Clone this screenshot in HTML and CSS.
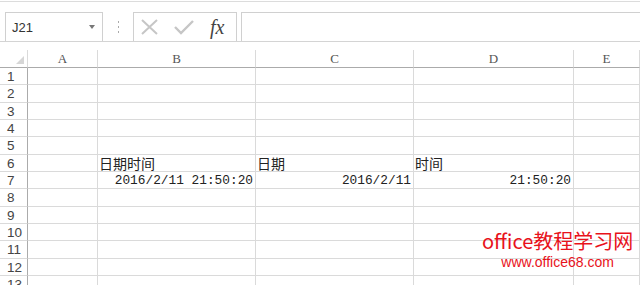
FILE: index.html
```html
<!DOCTYPE html>
<html>
<head>
<meta charset="utf-8">
<link rel="stylesheet" href="styles.css">
</head>
<body>
<div class="toolbar">
  <div class="namebox"><span class="nameval">J21</span><span class="dd"></span></div>
  <div class="dots"><i></i><i></i><i></i></div>
  <div class="btns">
    <svg class="ic" width="20" height="16" viewBox="0 0 20 16"><path d="M2 1 L17 15 M17 1 L2 15" stroke="#c6c6c6" stroke-width="2" fill="none"/></svg>
    <svg class="ic" width="22" height="16" viewBox="0 0 22 16"><path d="M2 8 L8 14 L20 2" stroke="#c6c6c6" stroke-width="2.4" fill="none"/></svg>
    <span class="fx">fx</span>
  </div>
  <div class="formula"></div>
</div>
<div class="sheet">
  <div class="hdr corner"><span class="tri"></span></div>
  <div class="hdr col">A</div>
  <div class="hdr col">B</div>
  <div class="hdr col">C</div>
  <div class="hdr col">D</div>
  <div class="hdr col">E</div>

  <div class="rh">1</div><div class="c"></div><div class="c"></div><div class="c"></div><div class="c"></div><div class="c"></div>
  <div class="rh">2</div><div class="c"></div><div class="c"></div><div class="c"></div><div class="c"></div><div class="c"></div>
  <div class="rh">3</div><div class="c"></div><div class="c"></div><div class="c"></div><div class="c"></div><div class="c"></div>
  <div class="rh">4</div><div class="c"></div><div class="c"></div><div class="c"></div><div class="c"></div><div class="c"></div>
  <div class="rh">5</div><div class="c"></div><div class="c"></div><div class="c"></div><div class="c"></div><div class="c"></div>
  <div class="rh">6</div><div class="c"></div><div class="c cjk">日期时间</div><div class="c cjk">日期</div><div class="c cjk">时间</div><div class="c"></div>
  <div class="rh">7</div><div class="c"></div><div class="c num">2016/2/11 21:50:20</div><div class="c num">2016/2/11</div><div class="c num">21:50:20</div><div class="c"></div>
  <div class="rh">8</div><div class="c"></div><div class="c"></div><div class="c"></div><div class="c"></div><div class="c"></div>
  <div class="rh">9</div><div class="c"></div><div class="c"></div><div class="c"></div><div class="c"></div><div class="c"></div>
  <div class="rh">10</div><div class="c"></div><div class="c"></div><div class="c"></div><div class="c"></div><div class="c"></div>
  <div class="rh">11</div><div class="c"></div><div class="c"></div><div class="c"></div><div class="c"></div><div class="c"></div>
  <div class="rh">12</div><div class="c"></div><div class="c"></div><div class="c"></div><div class="c"></div><div class="c"></div>
  <div class="rh">13</div><div class="c"></div><div class="c"></div><div class="c"></div><div class="c"></div><div class="c"></div>
</div>
<div class="watermark">
  <div class="wm1">office教程学习网</div>
  <div class="wm2">www.office68.com</div>
</div>
</body>
</html>
```

FILE: styles.css
```css
html, body {
  margin: 0;
  padding: 0;
  background: #fff;
  width: 640px;
  height: 285px;
  overflow: hidden;
  position: relative;
  font-family: "Liberation Sans", Arial, sans-serif;
}
.toolbar {
  border-top: 1px solid #dcdcdc;
  border-bottom: 1px solid #d4d4d4;
  box-sizing: border-box;
  margin-top: 1px;
  display: flex;
  align-items: flex-end;
  padding-left: 5px;
  height: 41px;
}
.namebox {
  width: 98px;
  height: 29px;
  box-sizing: border-box;
  border: 1px solid #d0d0d0;
  border-bottom: none;
  display: flex;
  align-items: center;
  justify-content: space-between;
  padding: 0 7px 0 6px;
}
.nameval {
  font-size: 13px;
  color: #333;
}
.dd {
  width: 0;
  height: 0;
  border-left: 3px solid transparent;
  border-right: 3px solid transparent;
  border-top: 4px solid #777;
}
.dots {
  width: 30px;
  height: 29px;
  display: flex;
  flex-direction: column;
  align-items: center;
  justify-content: center;
  gap: 3px;
}
.dots i {
  width: 1px;
  height: 2px;
  background: #aaa;
  display: block;
}
.btns {
  width: 104px;
  height: 29px;
  box-sizing: border-box;
  border: 1px solid #d0d0d0;
  border-bottom: none;
  display: flex;
  align-items: center;
  padding-left: 6px;
  gap: 13px;
}
.fx {
  font-family: "Liberation Serif", "Times New Roman", serif;
  font-style: italic;
  font-size: 20px;
  color: #444;
  margin-left: 2px;
}
.formula {
  flex: 1;
  height: 29px;
  box-sizing: border-box;
  border: 1px solid #d0d0d0;
  border-bottom: none;
  border-right: none;
  margin-left: 4px;
}
.sheet {
  margin-top: 8px;
  display: grid;
  grid-template-columns: 28px 70px 158px 158px 160px 66px;
  grid-template-rows: 18px repeat(13, 17.34px);
}
.hdr {
  box-sizing: border-box;
  border-right: 1px solid #dadada;
  border-bottom: 1px solid #ababab;
  background: #fff;
}
.col {
  font-family: "Liberation Serif", serif;
  font-size: 13px;
  color: #555;
  text-align: center;
  line-height: 18px;
}
.corner {
  position: relative;
}
.tri {
  position: absolute;
  right: 3px;
  bottom: 3px;
  width: 0;
  height: 0;
  border-left: 8px solid transparent;
  border-bottom: 8px solid #d6d6d6;
}
.rh {
  box-sizing: border-box;
  border-right: 1px solid #ababab;
  border-bottom: 1px solid #dadada;
  font-size: 13.5px;
  color: #444;
  padding-left: 7px;
  line-height: 17px;
}
.c {
  box-sizing: border-box;
  border-right: 1px solid #dadada;
  border-bottom: 1px solid #dadada;
  font-size: 13px;
  line-height: 17px;
  color: #222;
  white-space: nowrap;
  overflow: hidden;
}
.c.cjk {
  font-family: "Noto Sans CJK SC", sans-serif;
  font-size: 14px;
  padding-left: 1px;
  line-height: 17px;
  overflow: visible;
}
.num {
  font-family: "Liberation Mono", monospace;
  font-size: 12.8px;
  text-align: right;
  padding-right: 2px;
}
.watermark {
  position: absolute;
  left: 482px;
  top: 227px;
  display: flex;
  flex-direction: column;
  align-items: center;
  color: #e8121b;
}
.wm1 {
  font-family: "Noto Sans CJK SC", "Liberation Sans", sans-serif;
  font-size: 20px;
  line-height: 27px;
}
.wm2 {
  font-family: "Liberation Sans", sans-serif;
  font-size: 14px;
  line-height: 17px;
}
```
